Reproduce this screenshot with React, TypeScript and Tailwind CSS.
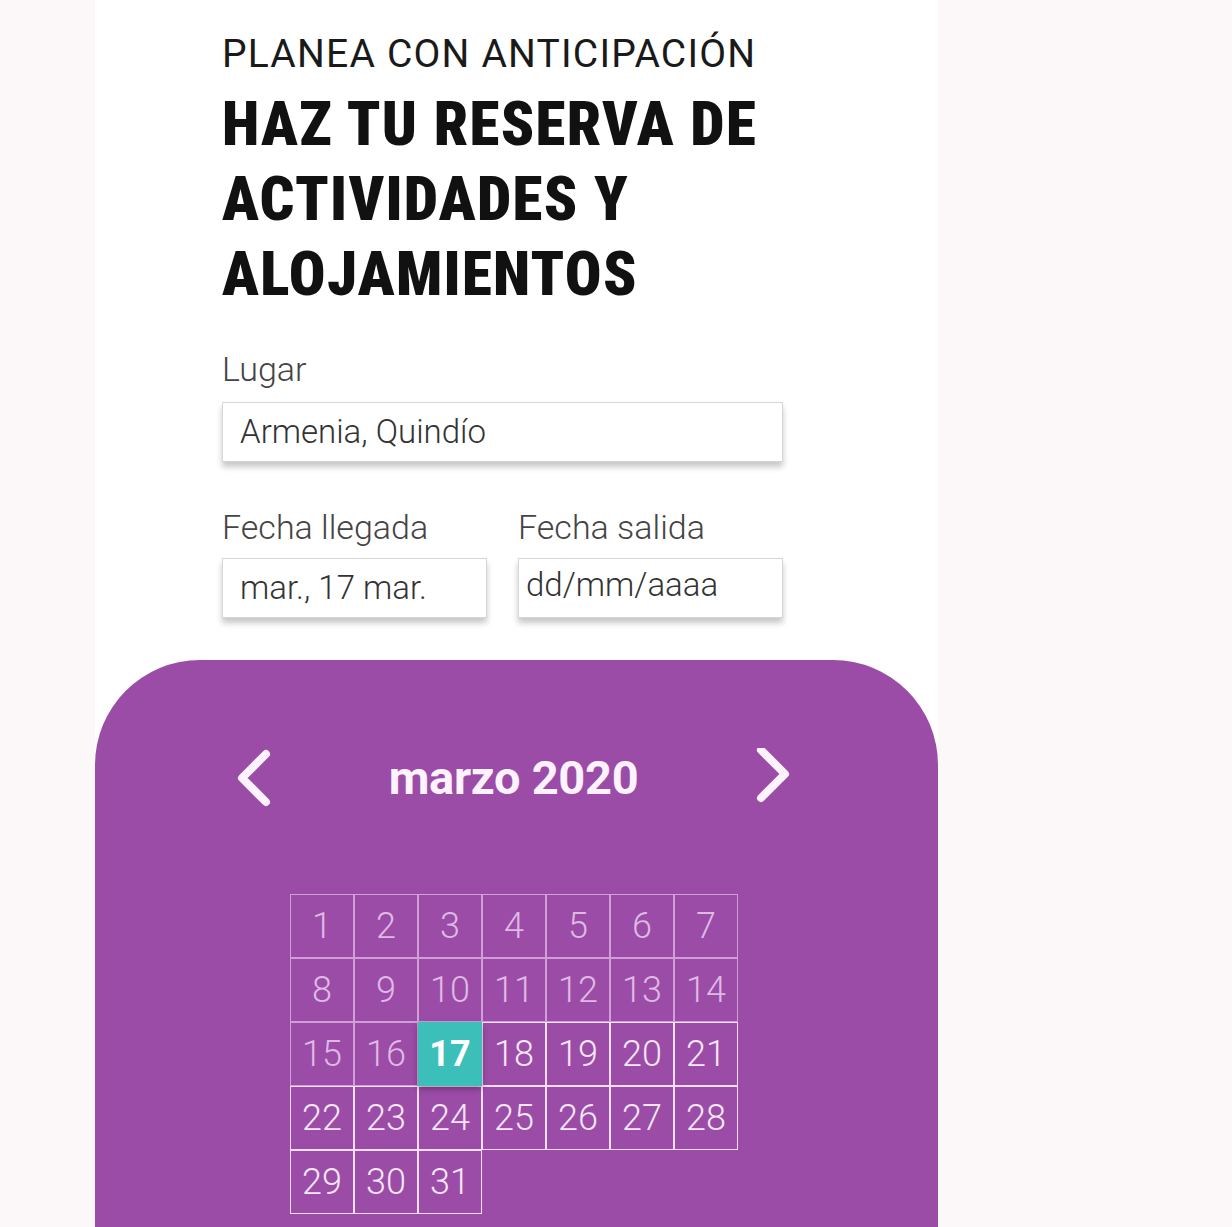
import React from "react";

const days = Array.from({ length: 31 }, (_, i) => i + 1);
const SELECTED = 17;

function Chevron({ dir }: { dir: "left" | "right" }) {
  const d = dir === "left" ? "M30 6 L6 30 L30 54" : "M8 2 L32 26 L8 50";
  return (
    <svg width="38" height="60" viewBox="0 0 38 60" fill="none">
      <path d={d} stroke="#fdf3fd" strokeWidth="8" strokeLinecap="round" strokeLinejoin="round" />
    </svg>
  );
}

export default function App() {
  return (
    <div className="h-[1227px] w-full overflow-hidden bg-[#fcf8f9]">
      <div className="ml-[95px] flex h-full w-[843px] flex-col bg-white">
        {/* Heading + form */}
        <div className="pl-[127px] pt-[35px]">
          <p className="text-[39px] font-normal leading-[39px] tracking-[1.2px] text-[#1a1a1a] [font-family:Roboto,sans-serif]">
            PLANEA CON ANTICIPACIÓN
          </p>
          <h1 className="mt-[13px] text-[61px] font-black leading-[75px] tracking-[1.3px] text-[#111] [font-family:'Liberation_Sans_Narrow','Roboto_Condensed',Roboto,sans-serif]">
            HAZ TU RESERVA DE
            <br />
            ACTIVIDADES Y
            <br />
            ALOJAMIENTOS
          </h1>

          <div className="mt-[41px] w-[561px] [font-family:Roboto,sans-serif]">
            <label className="block text-[34px] font-light leading-[33px] text-[#444]">Lugar</label>
            <div className="mt-[16px] flex h-[60px] items-center border border-[#d6d6d6] bg-white pl-[17px] text-[33px] font-light text-[#333] shadow-[0_5px_6px_rgba(0,0,0,0.22)]">
              Armenia, Quindío
            </div>

            <div className="mt-[49px] flex gap-[31px]">
              <div className="w-[265px]">
                <label className="block text-[34px] font-light leading-[33px] text-[#444]">Fecha llegada</label>
                <div className="mt-[14px] flex h-[60px] items-center border border-[#d6d6d6] bg-white pl-[17px] text-[33px] font-light text-[#333] shadow-[0_5px_6px_rgba(0,0,0,0.22)]">
                  mar., 17 mar.
                </div>
              </div>
              <div className="w-[265px]">
                <label className="block text-[34px] font-light leading-[33px] text-[#444]">Fecha salida</label>
                <div className="mt-[14px] flex h-[60px] items-start border border-[#d6d6d6] bg-white pl-[7px] pt-[8px] text-[33px] font-light leading-[36px] text-[#333] shadow-[0_5px_6px_rgba(0,0,0,0.22)]">
                  dd/mm/aaaa
                </div>
              </div>
            </div>
          </div>
        </div>

        {/* Calendar card */}
        <div className="mt-[42px] flex-1 rounded-t-[105px] bg-[#9a4ca6] pt-[88px] [font-family:Roboto,sans-serif]">
          <div className="ml-[141px] flex h-[60px] w-[555px] items-center justify-between">
            <Chevron dir="left" />
            <span className="text-[47px] font-bold tracking-[-0.3px] text-[#fdf2fd]">marzo 2020</span>
            <Chevron dir="right" />
          </div>

          <div className="ml-[195px] mt-[86px] grid w-[448px] grid-cols-7">
            {days.map((d) => {
              const selected = d === SELECTED;
              const bright = d > SELECTED;
              return (
                <div
                  key={d}
                  className={
                    selected
                      ? "relative z-10 flex h-[64px] items-center justify-center bg-[#3cbfb8] text-[36px] font-bold text-white shadow-[0_3px_6px_rgba(0,0,0,0.3)]"
                      : bright
                        ? "flex h-[64px] items-center justify-center border border-[#f4dff6] text-[36px] font-light text-[#f7e6f8]"
                        : "flex h-[64px] items-center justify-center border border-[#cf9fd6] text-[36px] font-light text-[#dfb9e4]"
                  }
                >
                  {d}
                </div>
              );
            })}
          </div>
        </div>
      </div>
    </div>
  );
}
